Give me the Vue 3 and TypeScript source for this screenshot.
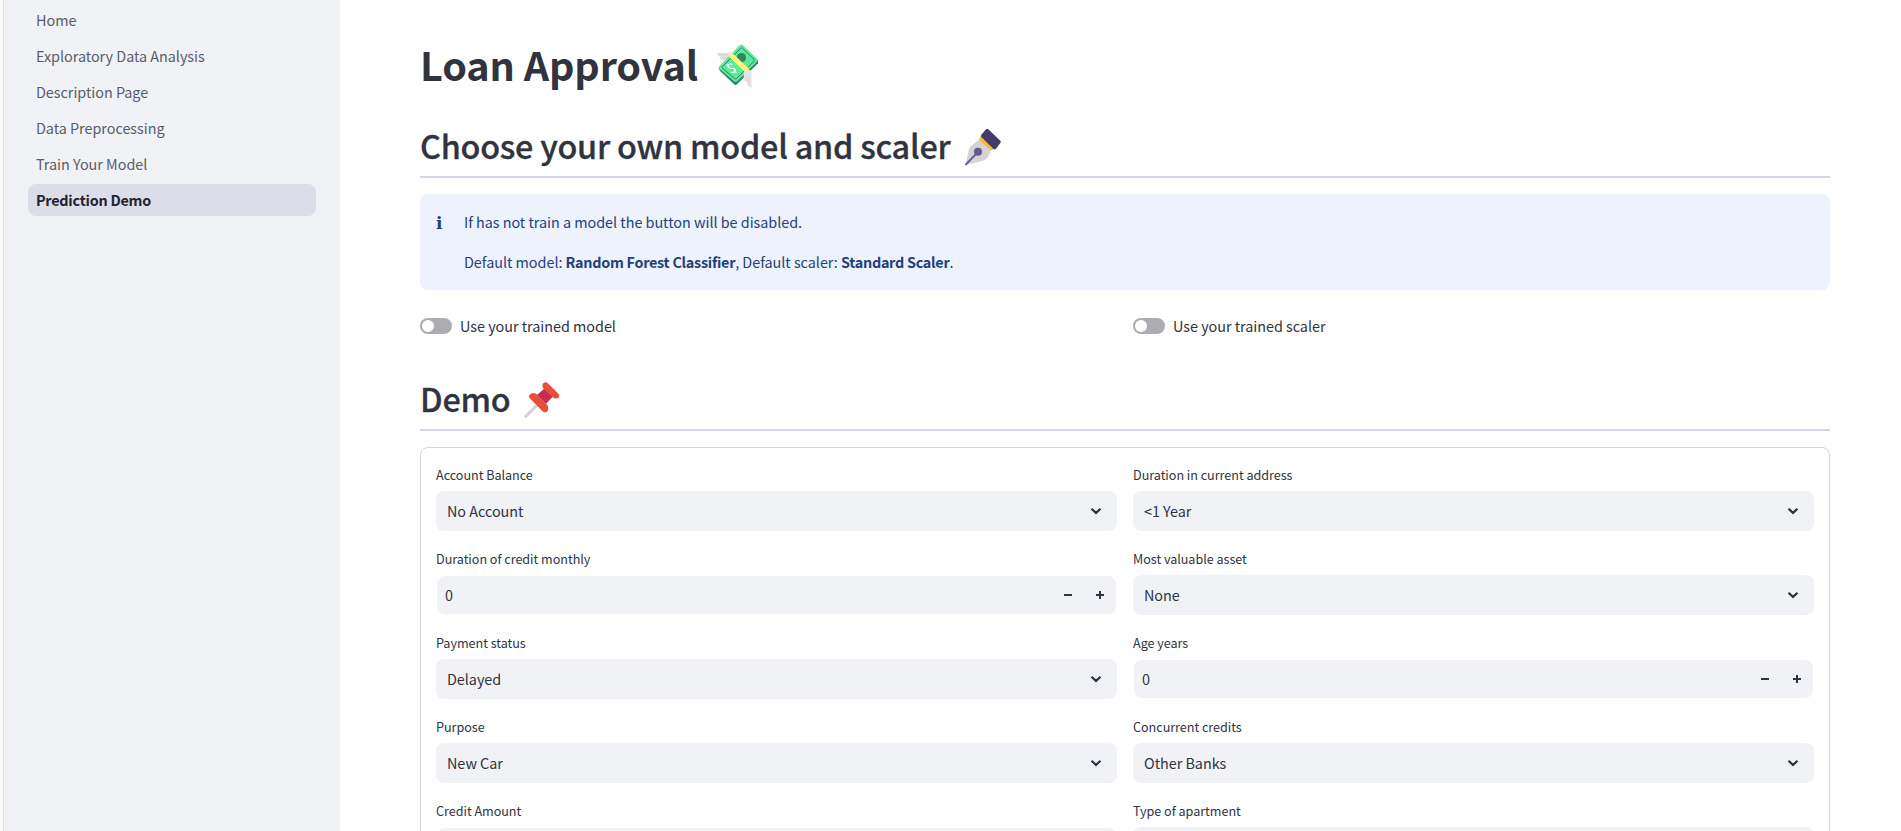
<script setup lang="ts">
interface Field {
  label: string
  kind: 'select' | 'number'
  value: string
}

const pages: string[] = [
  'Home',
  'Exploratory Data Analysis',
  'Description Page',
  'Data Preprocessing',
  'Train Your Model',
  'Prediction Demo',
]
const activePage = 'Prediction Demo'

const toggles: string[] = ['Use your trained model', 'Use your trained scaler']

const columns: Field[][] = [
  [
    { label: 'Account Balance', kind: 'select', value: 'No Account' },
    { label: 'Duration of credit monthly', kind: 'number', value: '0' },
    { label: 'Payment status', kind: 'select', value: 'Delayed' },
    { label: 'Purpose', kind: 'select', value: 'New Car' },
    { label: 'Credit Amount', kind: 'number', value: '' },
  ],
  [
    { label: 'Duration in current address', kind: 'select', value: '<1 Year' },
    { label: 'Most valuable asset', kind: 'select', value: 'None' },
    { label: 'Age years', kind: 'number', value: '0' },
    { label: 'Concurrent credits', kind: 'select', value: 'Other Banks' },
    { label: 'Type of apartment', kind: 'select', value: '' },
  ],
]
</script>

<template>
  <div class="app">
    <div class="edge"></div>
    <aside class="sidebar">
      <nav>
        <a v-for="p in pages" :key="p" class="nav-item" :class="{ active: p === activePage }">{{ p }}</a>
      </nav>
    </aside>

    <main class="main">
      <h1 class="title">
        <span class="title-text">Loan Approval</span>
        <svg class="money" viewBox="48 36 132 138" aria-hidden="true">
          <path d="M50 66 L86 66 L94 84 L76 90 L62 84 L58 76Z" fill="#e2e2e2" />
          <path d="M54 72H84M62 80H84" stroke="#cfcfcf" stroke-width="2" />
          <path d="M56 110 L60 120 L104 161 Q108 163 112 159 L174 97 L174 87Z" fill="#2f8463" />
          <path d="M58 105 L119 43 Q124 39 129 43 L171 83 Q175 88 171 92 L112 151 Q107 155 102 151 L58 113 Q54 109 58 105Z" fill="#5aeb98" />
          <path d="M67 107 L122 52 Q125 49 128 52 L162 85 Q165 88 162 91 L109 143 Q106 145 103 142 L68 112 Q65 109 67 107Z" fill="none" stroke="#2f8463" stroke-width="3" />
          <circle cx="124" cy="80" r="14" fill="#2f8463" />
          <path d="M84 74 L94 64 L148 114 L137 125Z" fill="#fff478" />
          <path d="M137 125 L148 114 L146 125Z" fill="#f3ad61" />
          <path d="M96 100 Q91 96 86 101 Q81 107 88 111 Q94 113 98 112 Q107 112 105 120 Q102 127 94 124 M81 101 L87 105 M103 120 L108 124" fill="none" stroke="#fff" stroke-width="3.5" stroke-linecap="round" />
          <path d="M131 126 Q136 116 149 117 L155 121 V171 L144 165 L140 154 L132 148Z" fill="#e6e6e6" />
          <path d="M140 132V152M147 132V164" stroke="#d0d0d0" stroke-width="2" />
        </svg>
      </h1>

      <h2 class="heading first">
        <span class="choose-text">Choose your own model and scaler</span>
        <svg class="glyph" viewBox="42 36 114 114" aria-hidden="true">
          <path d="M47 147 L56 103 Q60 90 72 83 L91 68 L125 99 L116 120 Q110 130 99 134Z" fill="#d3d3d3" />
          <path d="M94 57 L88 68 Q87 72 90 75 L121 101 Q124 103 128 101 L138 97Z" fill="#f9b53f" />
          <path d="M94 56 L108 40 Q111 37 115 40 L151 74 Q154 77 151 81 L138 98 Q134 101 130 98 L95 64 Q91 60 94 56Z" fill="#433b6b" />
          <circle cx="84" cy="107" r="12" fill="#635994" />
          <path d="M48 145 L82 110" stroke="#635994" stroke-width="6" stroke-linecap="round" />
        </svg>
      </h2>

      <section class="info">
        <span class="info-icon">i</span>
        <div class="info-body">
          <p class="line-a">If has not train a model the button will be disabled.</p>
          <p class="line-b">Default model: <strong>Random Forest Classifier</strong>, Default scaler: <strong>Standard Scaler</strong>.</p>
        </div>
      </section>

      <div class="toggles">
        <label v-for="t in toggles" :key="t" class="toggle">
          <span class="track"><span class="knob"></span></span>
          <span>{{ t }}</span>
        </label>
      </div>

      <h2 class="heading second">
        <span class="demo-text">Demo</span>
        <svg class="glyph" viewBox="39 30 114 114" aria-hidden="true">
          <path d="M47 136 L82 102" stroke="#d3d3d3" stroke-width="9" stroke-linecap="round" />
          <path d="M81 72 L104 52 L128 77 L108 98Z" fill="#c22f51" />
          <path d="M101 54 Q94 45 100 37 Q107 30 115 38 L146 69 Q150 73 147 78 Q139 87 128 79Z" fill="#e84f38" />
          <path d="M58 80 Q55 75 59 71 Q68 62 80 70 L109 98 Q118 109 113 120 Q107 127 99 122Z" fill="#e84f38" />
        </svg>
      </h2>

      <form class="form" @submit.prevent>
        <div v-for="(col, i) in columns" :key="i" class="column">
          <div v-for="f in col" :key="f.label" class="field">
            <div class="label">{{ f.label }}</div>
            <div v-if="f.kind === 'select'" class="control select">
              <span>{{ f.value }}</span>
              <svg class="chevron" viewBox="0 0 10 6" aria-hidden="true">
                <path d="M0.5 0.7 L5 4.9 L9.5 0.7" fill="none" stroke="#31333f" stroke-width="2.2" />
              </svg>
            </div>
            <div v-else class="control number">
              <span>{{ f.value }}</span>
              <span class="steps">
                <svg viewBox="0 0 8 8" aria-hidden="true"><path d="M0 3h8v2H0z" fill="#31333f" /></svg>
                <svg viewBox="0 0 8 8" aria-hidden="true"><path d="M0 3h3V0h2v3h3v2H5v3H3V5H0z" fill="#31333f" /></svg>
              </span>
            </div>
          </div>
        </div>
      </form>
    </main>
  </div>
</template>

<style>
body {
  overflow: hidden;
}
</style>

<style scoped>
* {
  box-sizing: border-box;
}

.app {
  display: flex;
  height: 831px;
  overflow: hidden;
  background: #fff;
  color: #31333f;
  font-family: "Noto Sans CJK SC", "Noto Sans", sans-serif;
  font-size: 14.4px;
  line-height: 24px;
  letter-spacing: -0.03px;
  white-space: nowrap;
}

.edge {
  flex: 0 0 4px;
  background: #fafaf8;
  border-right: 1px solid #e0e0e3;
}

.sidebar {
  flex: 0 0 336px;
  padding: 4px 24px 0 24px;
  background: #f0f2f6;
}

.nav-item {
  display: flex;
  align-items: center;
  height: 32px;
  margin-bottom: 4px;
  padding: 0 8px;
  border-radius: 8px;
  color: #5a5c69;
}

.nav-item.active {
  background: #dcdde9;
  color: #22232f;
  font-weight: 600;
  letter-spacing: -0.24px;
}

.main {
  flex: 1;
  min-width: 0;
  padding: 0 71px 0 80px;
}

h1,
h2,
p {
  margin: 0;
}

.title {
  display: flex;
  align-items: center;
  height: 98px;
  padding-top: 31px;
  font-size: 39.6px;
  line-height: 66px;
  font-weight: 700;
  letter-spacing: -0.12px;
}

.title-text {
  width: 296px;
  margin-top: -1px;
}

.money {
  width: 44px;
  height: 46px;
  margin-top: 2px;
}

.heading {
  display: flex;
  align-items: center;
  font-size: 32.4px;
  line-height: 44px;
  font-weight: 500;
  letter-spacing: -0.25px;
  -webkit-text-stroke: 0.3px #31333f;
  border-bottom: 2px solid #d5d6e4;
}

.first {
  height: 80px;
  padding-top: 16px;
}

.choose-text {
  width: 544px;
}

.demo-text {
  width: 103px;
}

.glyph {
  width: 38px;
  height: 38px;
  margin-top: 3px;
}

.info {
  display: flex;
  height: 96px;
  margin-top: 16px;
  padding: 16px;
  border-radius: 8px;
  background: #edf2fd;
  color: #243f7c;
}

.info-icon {
  width: 28px;
  padding-top: 1px;
  font-family: "DejaVu Serif", serif;
  font-size: 17px;
  font-weight: 700;
}

.info-body p + p {
  margin-top: 16px;
}

.info-body strong {
  letter-spacing: -0.27px;
}

.toggles {
  display: grid;
  grid-template-columns: 1fr 1fr;
  gap: 16px;
  margin-top: 24px;
}

.toggle {
  display: flex;
  align-items: center;
  gap: 8px;
  height: 24px;
}

.track {
  width: 32px;
  height: 16px;
  padding: 2px;
  border-radius: 8px;
  background: #acacb2;
}

.knob {
  display: block;
  width: 12px;
  height: 12px;
  border-radius: 50%;
  background: #fff;
}

.second {
  height: 93px;
  padding-top: 29px;
}

.form {
  display: grid;
  grid-template-columns: 1fr 1fr;
  gap: 16px;
  height: 500px;
  margin-top: 16px;
  padding: 15px;
  border: 1px solid #d6d6d9;
  border-radius: 8px;
}

.field {
  height: 84px;
}

.label {
  height: 28px;
  font-size: 12.6px;
  line-height: 24px;
}

.control {
  display: flex;
  align-items: center;
  justify-content: space-between;
  border-radius: 8px;
  background: #f0f2f6;
}

.select {
  height: 40px;
  padding: 0 16px 0 11px;
}

.chevron {
  width: 10px;
  height: 6px;
  overflow: visible;
}

.number {
  height: 38px;
  margin: 1px;
  padding: 0 12px 0 8px;
}

.steps {
  display: flex;
  gap: 24px;
}

.steps svg {
  width: 8px;
  height: 8px;
}
</style>
